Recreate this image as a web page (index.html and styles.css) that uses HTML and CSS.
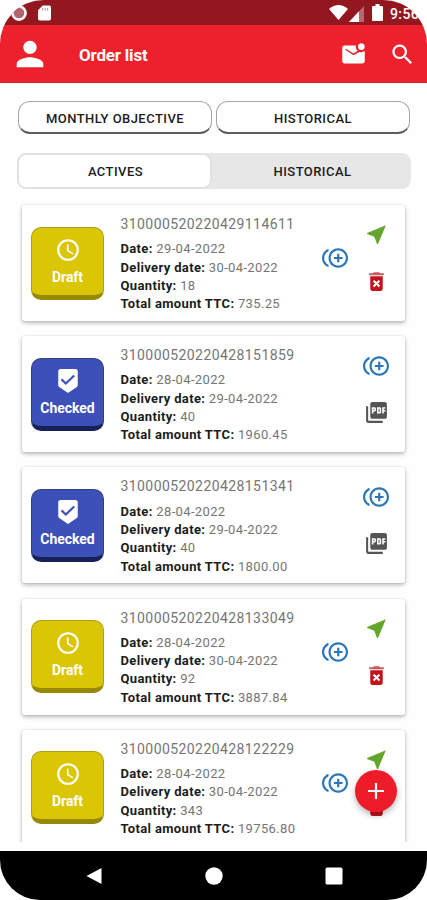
FILE: index.html
```html
<!DOCTYPE html>
<html lang="en">
<head>
<meta charset="utf-8">
<title>Order list</title>
<link rel="stylesheet" href="styles.css">
</head>
<body>
<svg class="defs" aria-hidden="true">
  <symbol id="clock" viewBox="0 0 24 24"><path d="M12 2a10 10 0 1 0 0 20 10 10 0 0 0 0-20zm0 18a8 8 0 1 1 0-16 8 8 0 0 1 0 16zm.5-13H11v6l5.250 3.150.75-1.230-4.500-2.670z"/></symbol>
  <symbol id="shield" viewBox="0 0 24 24"><path d="M19 1H5c-1.100 0-2 .9-2 2v12.930c0 .69.35 1.300.88 1.660L12 23l8.110-5.410c.53-.36.88-.97.88-1.660L21 3c0-1.100-.9-2-2-2z"/><path class="tick" d="M6 10.500l4 3.800 7.700-7.400"/></symbol>
  <symbol id="send" viewBox="0 0 24 24"><path d="M21 3L3 10.530v.98l6.840 2.650L12.480 21h.98L21 3z"/></symbol>
  <symbol id="dup" viewBox="0 0 24 24"><path d="M16 8h-2v3h-3v2h3v3h2v-3h3v-2h-3V8zM2 12c0-2.790 1.640-5.200 4.010-6.320V3.520C2.520 4.760 0 8.090 0 12s2.520 7.240 6.010 8.480v-2.160C3.640 17.200 2 14.790 2 12zm13-9c-4.960 0-9 4.040-9 9s4.040 9 9 9 9-4.040 9-9-4.040-9-9-9zm0 16c-3.860 0-7-3.140-7-7s3.140-7 7-7 7 3.140 7 7-3.140 7-7 7z"/></symbol>
  <symbol id="trash" viewBox="0 0 24 24"><path d="M6 19c0 1.100.9 2 2 2h8c1.100 0 2-.9 2-2V7H6v12zm2.460-7.120l1.410-1.410L12 12.590l2.120-2.120 1.410 1.410L13.410 14l2.120 2.120-1.410 1.410L12 15.410l-2.120 2.120-1.410-1.410L10.590 14l-2.130-2.120z"/><path class="lid" d="M15.500 4l-1-1h-5l-1 1H5v2h14V4z"/></symbol>
  <symbol id="pdf" viewBox="0 0 24 24"><path d="M20 2H8c-1.100 0-2 .9-2 2v12c0 1.100.9 2 2 2h12c1.100 0 2-.9 2-2V4c0-1.100-.9-2-2-2zm-8.500 7.500c0 .83-.67 1.500-1.500 1.500H9v2H7.500V7H10c.83 0 1.500.67 1.500 1.500v1zm5 2c0 .83-.67 1.500-1.500 1.500h-2.500V7H15c.83 0 1.500.67 1.500 1.500v3zm4-3H19v1h1.500V11H19v2h-1.500V7h3v1.500zM9 9.500h1v-1H9v1zM4 6H2v14c0 1.100.9 2 2 2h14v-2H4V6zm10 5.500h1v-3h-1v3z"/></symbol>
</svg>
<div class="phone">
  <header class="status">
    <svg class="rec" viewBox="0 0 16 16"><circle cx="8" cy="8" r="6.200"/><circle class="ring" cx="8" cy="8" r="6.600"/></svg>
    <svg class="sd" viewBox="0 0 14 16"><path d="M5 0h7q2 0 2 2v12q0 2-2 2H2q-2 0-2-2V5z"/><path class="slots" d="M5 2.500v3M7.700 2.500v3M10.400 2.500v3"/></svg>
    <span class="spacer"></span>
    <svg class="wifi" viewBox="0 0 19 15"><path d="M0 4Q9.500-4 19 4L9.500 15z"/></svg>
    <svg class="cell" viewBox="0 0 15 16"><path class="dim" d="M15 0v16H0z"/><path d="M10 5.300V16H0z"/></svg>
    <svg class="batt" viewBox="0 0 11 17"><path d="M3.500 0h4v2H10q1 0 1 1v13q0 1-1 1H1q-1 0-1-1V3q0-1 1-1h2.500z"/></svg>
    <span class="time">9:56</span>
  </header>
  <nav class="appbar">
    <svg class="person" viewBox="0 0 24 24"><path d="M12 12c2.210 0 4-1.790 4-4s-1.790-4-4-4-4 1.790-4 4 1.790 4 4 4zm0 2c-2.670 0-8 1.340-8 4v2h16v-2c0-2.660-5.330-4-8-4z"/></svg>
    <h1>Order list</h1>
    <svg class="act mail" viewBox="0 0 24 24"><path d="M22 8.980V18c0 1.100-.9 2-2 2H4c-1.100 0-2-.9-2-2V6c0-1.100.9-2 2-2h10.100c-.06.32-.1.66-.1 1 0 1.480.65 2.790 1.670 3.710L12 11 5 6.600v1.500l7 4.600 5.300-3.020c.54.2 1.100.32 1.700.32 1.130 0 2.160-.39 3-1.020zM16 5c0 1.660 1.340 3 3 3s3-1.340 3-3-1.340-3-3-3-3 1.340-3 3z"/></svg>
    <svg class="act search" viewBox="0 0 24 24"><path d="M15.500 14h-.79l-.28-.27C15.410 12.590 16 11.110 16 9.500 16 5.910 13.090 3 9.500 3S3 5.910 3 9.500 5.910 16 9.500 16c1.610 0 3.090-.59 4.230-1.570l.27.28v.79l5 4.990L20.490 19l-4.990-5zm-6 0C7.010 14 5 11.990 5 9.500S7.010 5 9.500 5 14 7.010 14 9.500 11.990 14 9.500 14z"/></svg>
  </nav>
  <div class="buttons"><button class="pill">MONTHLY OBJECTIVE</button><button class="pill">HISTORICAL</button></div>
  <div class="tabs"><button class="tab on">ACTIVES</button><button class="tab">HISTORICAL</button></div>
  <main class="list">
    <article class="card">
      <div class="badge draft"><svg><use href="#clock"/></svg><span>Draft</span></div>
      <div class="info"><h2>310000520220429114611</h2><p><b>Date:</b> 29-04-2022</p><p><b>Delivery date:</b> 30-04-2022</p><p><b>Quantity:</b> 18</p><p><b>Total amount TTC:</b> 735.25</p></div>
      <svg class="dup"><use href="#dup"/></svg>
      <div class="side"><svg class="send"><use href="#send"/></svg><svg class="trash"><use href="#trash"/></svg></div>
    </article>
    <article class="card">
      <div class="badge checked"><svg><use href="#shield"/></svg><span>Checked</span></div>
      <div class="info"><h2>310000520220428151859</h2><p><b>Date:</b> 28-04-2022</p><p><b>Delivery date:</b> 29-04-2022</p><p><b>Quantity:</b> 40</p><p><b>Total amount TTC:</b> 1960.45</p></div>
      <div class="side"><svg class="dup"><use href="#dup"/></svg><svg class="pdf"><use href="#pdf"/></svg></div>
    </article>
    <article class="card">
      <div class="badge checked"><svg><use href="#shield"/></svg><span>Checked</span></div>
      <div class="info"><h2>310000520220428151341</h2><p><b>Date:</b> 28-04-2022</p><p><b>Delivery date:</b> 29-04-2022</p><p><b>Quantity:</b> 40</p><p><b>Total amount TTC:</b> 1800.00</p></div>
      <div class="side"><svg class="dup"><use href="#dup"/></svg><svg class="pdf"><use href="#pdf"/></svg></div>
    </article>
    <article class="card">
      <div class="badge draft"><svg><use href="#clock"/></svg><span>Draft</span></div>
      <div class="info"><h2>310000520220428133049</h2><p><b>Date:</b> 28-04-2022</p><p><b>Delivery date:</b> 30-04-2022</p><p><b>Quantity:</b> 92</p><p><b>Total amount TTC:</b> 3887.84</p></div>
      <svg class="dup"><use href="#dup"/></svg>
      <div class="side"><svg class="send"><use href="#send"/></svg><svg class="trash"><use href="#trash"/></svg></div>
    </article>
    <article class="card">
      <div class="badge draft"><svg><use href="#clock"/></svg><span>Draft</span></div>
      <div class="info"><h2>310000520220428122229</h2><p><b>Date:</b> 28-04-2022</p><p><b>Delivery date:</b> 30-04-2022</p><p><b>Quantity:</b> 343</p><p><b>Total amount TTC:</b> 19756.80</p></div>
      <svg class="dup"><use href="#dup"/></svg>
      <div class="side"><svg class="send"><use href="#send"/></svg><svg class="trash"><use href="#trash"/></svg></div>
    </article>
  </main>
  <button class="fab" aria-label="Add"><svg viewBox="0 0 16 16"><path d="M8 0v16M0 8h16"/></svg></button>
  <footer class="navbar">
    <svg viewBox="0 0 18 18"><path d="M16.500 1v16L1.500 9z"/></svg>
    <svg viewBox="0 0 18 18"><circle cx="9" cy="9" r="8.700"/></svg>
    <svg viewBox="0 0 18 18"><rect x=".5" y=".5" width="17" height="17" rx="1.500"/></svg>
  </footer>
</div>
</body>
</html>
```
FILE: styles.css
```css
* { box-sizing: border-box; }
body { margin: 0; background: #fff; font-family: Roboto, sans-serif; color: #1c1c1c; }
button { font-family: inherit; color: inherit; padding: 0; }
svg { display: block; flex: none; }
.defs { position: absolute; width: 0; height: 0; }
.phone { position: relative; display: flex; flex-direction: column; width: 427px; height: 900px; overflow: hidden; border-radius: 44px 44px 40px 40px; background: #fefefe; }

.status { display: flex; align-items: center; height: 25px; flex: none; padding-left: 11px; background: #92171f; fill: #fff; }
.spacer { flex: 1; }
.rec { width: 16px; height: 16px; fill: #b4646a; }
.rec .ring { fill: none; stroke: #fff; stroke-width: 2.6; }
.sd { width: 13px; height: 16px; margin-left: 11px; }
.slots { stroke: #92171f; stroke-width: 1; opacity: .5; }
.wifi { width: 19px; height: 15px; }
.cell { width: 15px; height: 16px; margin: 2px 8px 0 1px; }
.cell .dim { opacity: .35; }
.batt { width: 11px; height: 17px; margin-right: 7px; }
.time { width: 37px; font-size: 14px; font-weight: 500; color: #fff; letter-spacing: .4px; white-space: nowrap; padding-top: 2px; }

.appbar { display: flex; align-items: center; height: 58px; flex: none; padding: 0 11px 0 9.5px; background: #ed212b; border-bottom: 1px solid #d9202a; fill: #fff; }
.person { width: 40px; height: 40px; }
.appbar h1 { flex: 1; margin: 2px 0 0 29.500px; font-size: 17px; font-weight: 700; color: #fff; letter-spacing: -.2px; }
.act { width: 27px; height: 27px; }
.mail { margin: 1px 22.500px 0 0; }
.search { margin-top: 1px; }

.buttons { display: flex; gap: 4px; margin: 18px 17px 0 18px; height: 33px; flex: none; }
.pill, .tab { font-size: 13px; font-weight: 500; letter-spacing: .45px; }
.pill { flex: 1; padding-top: 2px; border: 1px solid #a5a5a5; border-bottom: 2.500px solid #5d5d5d; border-radius: 12px; background: #fff; }
.tabs { display: flex; margin: 19px 16px 0 17px; height: 36px; flex: none; border-radius: 9px; background: #e7e7e7; }
.tab { flex: 1; border: 0; padding-left: 2px; background: none; }
.tab.on { flex: 0 0 195px; background: #fff; border: 2px solid #e1e1e1; border-radius: 9px; }

.list { display: flex; flex-direction: column; gap: 15.200px; margin-top: 10px; padding: 6px 22px 0; height: 643px; flex: none; overflow: hidden; }
.card { position: relative; display: flex; height: 116px; flex: none; padding-left: 9px; border-radius: 3px; background: #fff; box-shadow: 0 2px 4px rgba(0,0,0,.28), 0 0 2px rgba(0,0,0,.12); }
.badge { display: flex; flex-direction: column; align-items: center; width: 73px; height: 73px; margin-top: 21.500px; padding-top: 9px; border-radius: 10px; border: 1px solid; border-bottom-width: 5px; fill: #fff; color: #fff; font-size: 14px; font-weight: 700; letter-spacing: -.05px; }
.badge svg { width: 26px; height: 26px; }
.badge span { margin-top: 5px; line-height: 18px; }
.draft { background: #dac605; border-color: #afa01c #afa01c #978805; }
.checked { background: #3c50b8; border-color: #35406f #35406f #172057; }
.tick { fill: none; stroke: #3c50b8; stroke-width: 2; }
.info { flex: 1; margin-left: 16.500px; padding-top: 10px; white-space: nowrap; }
.info h2 { margin: 0 0 7.300px; font-size: 14px; line-height: 18px; font-weight: 400; color: #757575; letter-spacing: .42px; }
.info p { margin: 0; font-size: 13px; line-height: 18.300px; color: #757575; letter-spacing: .35px; }
.info b { font-weight: 700; color: #1c1c1c; }
.dup { width: 26px; height: 26px; fill: #2a76b8; }
.card > .dup { margin: 40px 15px 0 0; }
.side { display: flex; flex-direction: column; align-items: center; gap: 22px; width: 26px; margin-right: 16px; padding-top: 17px; }
.side .dup { margin-bottom: -1px; }
.send, .trash, .pdf { width: 25px; height: 25px; }
.send { fill: #64a62c; }
.trash { fill: #c3141d; }
.lid { fill: #cc5960; }
.pdf { fill: #555; }

.fab { position: absolute; left: 355px; top: 770px; display: grid; place-items: center; width: 42px; height: 42px; border: 0; border-radius: 50%; background: #ed1c28; box-shadow: 0 3px 6px rgba(0,0,0,.3); }
.fab svg { width: 16px; height: 16px; fill: none; stroke: #fff; stroke-width: 2.2; }
.navbar { display: flex; align-items: center; justify-content: space-between; margin-top: auto; height: 49px; flex: none; padding: 0 84px 0 84.500px; background: #000; fill: #fff; }
.navbar svg { width: 18px; height: 18px; }
```
